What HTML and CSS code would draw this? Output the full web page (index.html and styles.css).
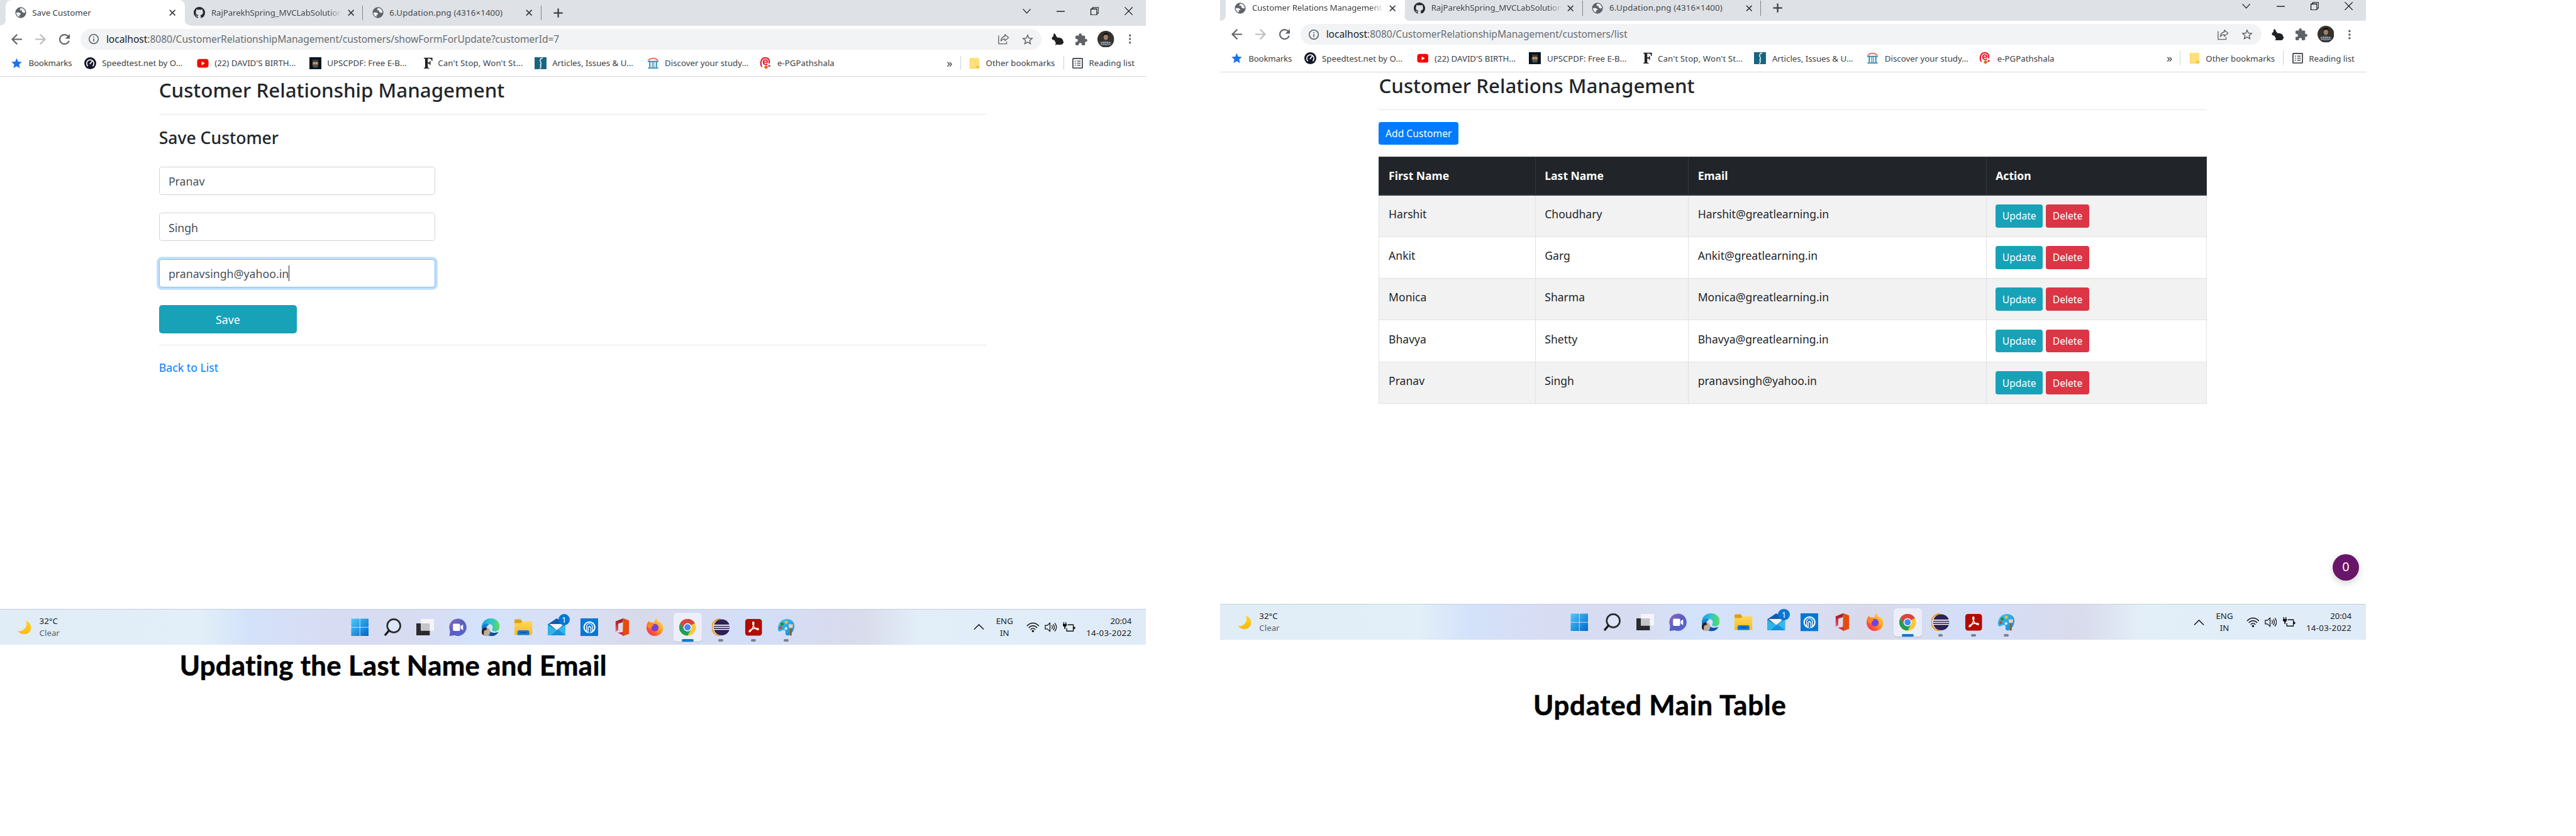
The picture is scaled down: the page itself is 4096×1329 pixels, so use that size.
FILE: index.html
```html
<!DOCTYPE html>
<html lang="en">
<head>
<meta charset="utf-8">
<title>Customer Relationship Management</title>
<link rel="stylesheet" href="styles.css">
</head>
<body>
<svg class="sprite" aria-hidden="true">
  <defs>
    <linearGradient id="gWin" x1="0" y1="0" x2="1" y2="1"><stop offset="0" stop-color="#4cc9fd"/><stop offset="1" stop-color="#0067c8"/></linearGradient>
    <linearGradient id="gChat" x1="0" y1="0" x2="1" y2="1"><stop offset="0" stop-color="#8a6fb8"/><stop offset=".5" stop-color="#5a5cc4"/><stop offset="1" stop-color="#5566d2"/></linearGradient>
    <linearGradient id="gEdge" x1="0" y1="0" x2="1" y2="0"><stop offset="0" stop-color="#1a9fdd"/><stop offset=".5" stop-color="#2fc3cf"/><stop offset="1" stop-color="#5fdd5a"/></linearGradient>
    <linearGradient id="gFold" x1="0" y1="0" x2="0" y2="1"><stop offset="0" stop-color="#ffd65c"/><stop offset="1" stop-color="#f8bd1c"/></linearGradient>
    <linearGradient id="gFox" x1="1" y1="0" x2="0" y2="1"><stop offset="0" stop-color="#fff04a"/><stop offset=".45" stop-color="#ff9a1f"/><stop offset=".75" stop-color="#ff4a3c"/><stop offset="1" stop-color="#f0289b"/></linearGradient>
    <linearGradient id="gPaint" x1="0" y1="0" x2="1" y2="1"><stop offset="0" stop-color="#43c8f5"/><stop offset="1" stop-color="#1186dc"/></linearGradient>
    <linearGradient id="gMoon" x1="0" y1="0" x2="0" y2="1"><stop offset="0" stop-color="#ffd51e"/><stop offset="1" stop-color="#fcb813"/></linearGradient>
    <linearGradient id="gOff" x1="0" y1="0" x2="0" y2="1"><stop offset="0" stop-color="#8e1414"/><stop offset=".6" stop-color="#d43a4a"/><stop offset="1" stop-color="#e8607a"/></linearGradient>
  </defs>
  <symbol id="globe" viewBox="0 0 20 20"><circle cx="10" cy="10" r="9.600" fill="#5f6368"/><path d="M2 9.600h3.600c3 0 4.600 1.300 4.600 3.900H7.600v4A8 8 0 0 1 2 9.600zM18 9.500c-1 1.300-3.500 1.600-4.300 0-1-.4-1.900-.8-1.900-2.300V5.700H8.300c0-1.700.9-2.700 1.900-3.700A8 8 0 0 1 18 9.500z" fill="#fff" opacity=".92"/></symbol>
  <symbol id="github" viewBox="0 0 16 16"><path fill="#24292f" d="M8 0C3.580 0 0 3.580 0 8c0 3.540 2.290 6.530 5.470 7.590.4.070.55-.17.55-.38 0-.19-.01-.82-.01-1.490-2.010.37-2.530-.49-2.690-.94-.09-.23-.48-.94-.82-1.130-.28-.15-.68-.52-.01-.53.630-.01 1.080.58 1.230.82.720 1.210 1.870.87 2.330.66.070-.52.280-.87.510-1.070-1.780-.2-3.640-.89-3.640-3.950 0-.87.310-1.590.820-2.150-.08-.2-.36-1.020.080-2.120 0 0 .670-.21 2.200.820.640-.18 1.320-.27 2-.27.680 0 1.360.090 2 .270 1.530-1.040 2.200-.820 2.200-.820.440 1.100.160 1.920.080 2.120.510.560.820 1.270.820 2.150 0 3.070-1.870 3.750-3.650 3.950.290.250.540.730.540 1.480 0 1.070-.010 1.930-.010 2.200 0 .210.150.460.550.380A8.013 8.013 0 0 0 16 8c0-4.420-3.580-8-8-8z"/></symbol>
  <symbol id="x" viewBox="0 0 12 12"><path d="M1 1l10 10M11 1L1 11" stroke="#3c4043" stroke-width="2" fill="none"/></symbol>
  <symbol id="plus" viewBox="0 0 16 16"><path d="M8 .5v15M.5 8h15" stroke="#3c4043" stroke-width="2.400" fill="none"/></symbol>
  <symbol id="chev" viewBox="0 0 14 14"><path d="M.8 3.500L7 10.500l6.200-7" stroke="#111" stroke-width="1.200" fill="none"/></symbol>
  <symbol id="min" viewBox="0 0 14 14"><path d="M0 7.500h14" stroke="#000" stroke-width="1.200" fill="none"/></symbol>
  <symbol id="rest" viewBox="0 0 14 14"><path d="M.6 3.600h10v9.800h-10zM3.500 3.400V1h10v9.500h-2.800" stroke="#000" stroke-width="1.200" fill="none"/></symbol>
  <symbol id="close" viewBox="0 0 14 14"><path d="M.5.5l13 13M13.500.5l-13 13" stroke="#000" stroke-width="1.100" fill="none"/></symbol>
  <symbol id="back" viewBox="4 4 16 16"><path d="M20 11H7.830l5.590-5.590L12 4l-8 8 8 8 1.410-1.410L7.830 13H20z"/></symbol>
  <symbol id="reload" viewBox="4 4 16 16"><path d="M17.650 6.350A7.958 7.958 0 0 0 12 4a8 8 0 1 0 7.730 10h-2.080A6 6 0 1 1 12 6c1.660 0 3.140.690 4.220 1.780L13 11h7V4z"/></symbol>
  <symbol id="info" viewBox="2 2 20 20"><path d="M11 7h2v2h-2zm0 4h2v6h-2zm1-9a10 10 0 1 0 0 20 10 10 0 0 0 0-20zm0 18a8 8 0 1 1 0-16 8 8 0 0 1 0 16z"/></symbol>
  <symbol id="share" viewBox="0 0 20 20"><path d="M1 4v14.500h14V14.500" fill="none" stroke="#5f6368" stroke-width="1.500"/><path d="M12 2l6.500 5.500L12 13V9.800c-3 0-5 1-7 3.700.4-4 2.500-7.500 7-8.200z" fill="none" stroke="#5f6368" stroke-width="1.500" stroke-linejoin="round"/></symbol>
  <symbol id="star" viewBox="2 2 20 19"><path d="M22 9.240l-7.190-.62L12 2 9.190 8.630 2 9.240l5.460 4.730L5.820 21 12 17.270 18.180 21l-1.630-7.030zM12 15.400l-3.760 2.270 1-4.280-3.320-2.880 4.380-.38L12 6.100l1.710 4.040 4.380.38-3.320 2.880 1 4.280z"/></symbol>
  <symbol id="rabbit" viewBox="0 0 20 18"><path d="M4 0c1.800.6 2.800 2.300 3.100 4.300 1.300.5 1.900 1.500 1.900 2.700 3-.6 9.300.3 9.700 6 .9.200 1 1.700.1 2-.5 1.600-1.800 3-3.800 3H5.800c-.6-.8.2-1.600 1.400-1.700L4.600 11C1.800 10.800 0 9.300.4 7.600.7 6.300 2 5.300 3.100 4.800 2.700 3.200 3.200 1.600 4 0z" fill="#202124"/></symbol>
  <symbol id="puzzle" viewBox="2 1 21 21"><path fill="#5f6368" d="M20.500 11H19V7c0-1.100-.9-2-2-2h-4V3.500a2.500 2.500 0 0 0-5 0V5H4c-1.100 0-2 .9-2 2v3.800h1.500c1.490 0 2.700 1.210 2.700 2.700s-1.210 2.700-2.700 2.700H2V20c0 1.100.9 2 2 2h3.800v-1.500c0-1.490 1.210-2.700 2.700-2.700s2.700 1.210 2.700 2.700V22H17c1.100 0 2-.9 2-2v-4h1.500a2.500 2.500 0 0 0 0-5z"/></symbol>
  <symbol id="avatar" viewBox="0 0 28 28"><circle cx="14" cy="14" r="14" fill="#35312d"/><path d="M4.500 22c1-4 4.500-5 9-5s8 1 9.500 5a14 14 0 0 1-18.500 0z" fill="#4c5a68"/><ellipse cx="14" cy="10.500" rx="3.800" ry="5" fill="#a07e68"/><path d="M9.600 10c-.6-5 2-6.500 4.500-6.500s5 1.500 4.300 6c-1-2.500-1.500-3-4-3s-4 .5-4.800 3.500z" fill="#120f0d"/><path d="M5 19.500h18M6 22.500h16" stroke="#b9bcc0" stroke-width="1.500" stroke-dasharray="2.500 1"/></symbol>
  <symbol id="dots" viewBox="0 0 4 16"><g fill="#5f6368"><circle cx="2" cy="2" r="1.900"/><circle cx="2" cy="8" r="1.900"/><circle cx="2" cy="14" r="1.900"/></g></symbol>

  <symbol id="bstar" viewBox="0 0 20 20"><path d="M10 1.500l2.500 5.800 6.300.6-4.800 4.200 1.500 6.200L10 15l-5.500 3.300L6 12.100 1.200 7.900l6.300-.6z" fill="#1a73e8"/></symbol>
  <symbol id="speed" viewBox="0 0 20 20"><circle cx="10" cy="10" r="10" fill="#141526"/><path d="M6 14.800a6 6 0 1 1 8 0" fill="none" stroke="#fff" stroke-width="1.800"/><path d="M9.200 11.500l4-5" stroke="#fff" stroke-width="1.800"/></symbol>
  <symbol id="yt" viewBox="0 0 20 20"><rect x=".5" y="3" width="19" height="14.500" rx="4" fill="#f00"/><path d="M8 7.200l5.500 3.100L8 13.400z" fill="#fff"/></symbol>
  <symbol id="upsc" viewBox="0 0 20 20"><rect width="20" height="20" fill="#07131c"/><path d="M5.500 6c0-3 9-3 9 0v2h-9z" fill="#2b3f4c"/><rect x="5" y="7.500" width="10" height="6" rx="2" fill="#9b6b43"/><path d="M7 10h2m2 0h2" stroke="#fff" stroke-width="1.300"/><path d="M5 13.500h10l-1.500 4h-7z" fill="#44535c"/><path d="M5 5.500l2-2m8 2l-2-2" stroke="#c33448" stroke-width="1"/></symbol>
  <symbol id="fnews" viewBox="0 0 20 20"><path d="M3 .8h14.500v5.400h-1.200c-.4-2.600-1.500-3.700-3.800-3.700H9.700v6.300h1.200c1.500 0 2.200-.8 2.400-2.500h1v7h-1c-.2-1.900-1-2.700-2.400-2.700H9.700v5.200c0 1.600.7 2 2.600 2.200v1H3v-1c1.700-.2 2.200-.6 2.200-2.200V4c0-1.500-.6-2-2.200-2.200z" fill="#222"/></symbol>
  <symbol id="teal" viewBox="0 0 20 20"><rect width="20" height="20" fill="#176580"/><path d="M13.500 1.500c-3 .3-4.200 2.200-4 4.700.2 1.700 1.300 2.500 1.300 4.300 0 1-.4 1.800-1 2.700M9 12.500c1.500.4 1.800 2.300 1.300 4.500-.2 1-.8 1.600-1.600 2" fill="none" stroke="#e8f2f5" stroke-width="1.700"/></symbol>
  <symbol id="inst" viewBox="0 0 20 20"><path d="M.5 5.500C4 1.500 6 .8 10 .8s6 .7 9.500 4.700l-3 0C14 3.500 12.500 3 10 3s-4 .5-6.500 2.500z" fill="#f0735a"/><path d="M1 6h18v1.800H1zM3.500 8h2v9h-2zM8 8h1.300v9H8zm2.700 0H12v9h-1.300zm3.800 0h2v9h-2zM1.500 17.200h17V19h-17z" fill="#2a86ae"/></symbol>
  <symbol id="epg" viewBox="0 0 20 20"><path d="M4 16C.5 13 .8 1 9.500 1c6 0 7.500 5 6 9.500" fill="none" stroke="#e8192c" stroke-width="2.300"/><path d="M6 8.300h7c0-5-7-5-7 0 0 4.500 5 4.300 7 2.700" fill="none" stroke="#e8192c" stroke-width="2"/><path d="M10.500 13l4 3.500-4 3.500-3.500-3.500z" fill="#f4661b"/><circle cx="16" cy="14.500" r="1.700" fill="#c01b24"/></symbol>
  <symbol id="folder" viewBox="0 0 16 18"><rect width="16" height="18" rx="1.500" fill="#ffe07a"/><path d="M11 13.500h5v3q0 1.500-1.500 1.500H11z" fill="#f1c544"/><path d="M.5 1.500V17l1 .5h9v-4.500" fill="none" stroke="#f5cf55" stroke-width="1"/></symbol>
  <symbol id="rlist" viewBox="0 0 18 18"><rect x="1" y="1" width="16" height="16" rx="1" fill="none" stroke="#4d5156" stroke-width="2"/><path d="M4 5.500h2m2 0h6M4 9h2m2 0h6M4 12.500h2m2 0h6" stroke="#4d5156" stroke-width="1.600"/></symbol>

  <symbol id="moon" viewBox="0 0 24 24"><path d="M14.500 0c6 2.500 9.500 8 9 13.500-.6 6-5.500 10.500-12 10.500-4.500 0-8.500-2-11.500-6 2.500 1 6 1 9.500-1.500C16 12.500 16.500 6.500 14.500 0z" fill="url(#gMoon)"/></symbol>
  <symbol id="win" viewBox="0 0 30 30"><path d="M.5.5h14v14H.5zm15 0h14v14h-14zM.5 15.500h14v14H.5zm15 0h14v14h-14z" fill="url(#gWin)"/></symbol>
  <symbol id="find" viewBox="0 0 30 30"><circle cx="17" cy="12.500" r="11" fill="#dfe6fa" stroke="#2c2c2e" stroke-width="2.800"/><path d="M9 20.500L3 27.500" stroke="#1c1c1e" stroke-width="3.500" stroke-linecap="round"/></symbol>
  <symbol id="task" viewBox="0 0 30 30"><path d="M0 8.500h22.500V28.500H0z" fill="#2b2b2d"/><path d="M7.500 1h22.500v19.500H7.500z" fill="#f6f6f8"/><path d="M7.500 8.500h15v12h-15z" fill="#c6c6ca"/></symbol>
  <symbol id="chat" viewBox="0 0 30 30"><path d="M15 .5a14.500 14.500 0 1 1-5.500 28L.8 29.500c-.6-.2.7-2.500.8-8.500A14.500 14.500 0 0 1 15 .5z" fill="url(#gChat)"/><rect x="6.500" y="9" width="12" height="12" rx="2" fill="#fff"/><path d="M19.500 13l4-3v10l-4-3z" fill="#fff"/></symbol>
  <symbol id="edge" viewBox="0 0 30 30"><path d="M0 13C1 5 7.500 0 15.500 0 24 0 30 6 30 13.500c0 5.500-3.500 8.500-7.500 8.500-3.500 0-6-1.500-5-3.500 2-3.500 1-8-4-9C8 8.500 3 10 0 13z" fill="url(#gEdge)"/><path d="M0 13c3-4 8.500-5 13-3-4 1-6 6-4 11.500 1.500 4.500 5 7.500 8 8.500C8 30-1 24 0 13z" fill="#1583d6"/><path d="M12 17c0 6 7 9 16 6-2.500 4.500-7 7-12.500 7C11 28 9.500 21 12 17z" fill="#0e4fa0"/><circle cx="7" cy="22.500" r="7.300" fill="#c3ab9c"/><path d="M0 21c1-5 4-6.500 7.500-5.200L9 19l-5 1.500L3 28.500A7.300 7.300 0 0 1 0 21z" fill="#2b2322"/></symbol>
  <symbol id="expl" viewBox="0 0 30 30"><path d="M0 3.500q0-2 2-2h8l3 3.500v4H0z" fill="#dda111"/><path d="M0 8h11l3-3h16v21.500q0 1.500-1.500 1.500h-27Q0 28 0 26.500z" fill="url(#gFold)"/><path d="M5 28v-5q0-3 3-3h14q3 0 3 3v5z" fill="#1478d4"/><path d="M9.500 23.800h11" stroke="#0a4f9c" stroke-width="1.500"/></symbol>
  <symbol id="mail" viewBox="0 0 30 30"><path d="M0 10L15 0l15 10v18.500H0z" fill="#0f5cad"/><path d="M2.500 9.500h25L15 20z" fill="#f3f4f6"/><path d="M0 10l17 11.500L0 28.500z" fill="#2fb3ea"/><path d="M30 10v18.500H0z" fill="#32b8f0"/><path d="M17 18.500l13 10H5z" fill="#1b8edb"/></symbol>
  <symbol id="vault" viewBox="0 0 30 30"><path d="M0 0h30v30H0z" fill="#0078d7"/><circle cx="15" cy="15" r="9" fill="none" stroke="#fff" stroke-width="2.200"/><path d="M10.300 21v-7.500a4.700 4.700 0 0 1 9.400 0V21M13 22v-6.500l2-2.500 2 2.500V22" fill="none" stroke="#fff" stroke-width="1.500"/><path d="M13.800 16h2.400v8.500h-2.400z" fill="#0078d7"/></symbol>
  <symbol id="office" viewBox="0 0 30 30"><path d="M17 0l9.500 3.500v22.500L16 29.700z" fill="#e64a0c"/><path d="M17 0l-13 5v17.500l4.500-2.500V9l7.500-2.500z" fill="url(#gOff)"/><path d="M7.500 24l8.500-1v-1h2v7.500z" fill="#d62a48"/><path d="M16.500 0l2.500 1v25l-3 3.500z" fill="#e05410" opacity=".6"/></symbol>
  <symbol id="fox" viewBox="0 0 30 30"><path d="M1 16C1 10 3 6 5.500 4c.3 1.500 1 2.500 2 3 2-1 4.500-1 6.500.5C14 4 16 1 18.500 0c0 3.500 1.500 5 4 7l.5-1.500c4 3 6.500 7 6 12C28.500 24.500 22.500 29.500 15 29.500S1.500 24 1 16z" fill="url(#gFox)"/><circle cx="15" cy="15.500" r="6.300" fill="#7a3fd8"/><path d="M3 11c4-2.500 8-1.500 10.500 1.500-3 0-4.500 1.500-4 4.500-4 0-7-2-6.500-6z" fill="#ff8a1e"/></symbol>
  <symbol id="chrome" viewBox="0 0 30 30"><circle cx="15" cy="15" r="14" fill="#fcc934"/><path d="M15 15L2.900 8A14 14 0 0 1 27.100 8z" fill="#d9453a"/><path d="M2.900 8A14 14 0 0 0 15 29l6-10.500L15 15 8.900 18.500z" fill="#1e9e58"/><path d="M15 8.500h12.400A14 14 0 0 0 2.900 8l6.200 10.500z" fill="#d9453a"/><circle cx="15" cy="15" r="6.800" fill="#fff"/><circle cx="15" cy="15" r="5.300" fill="#4486f4"/></symbol>
  <symbol id="eclipse" viewBox="0 0 30 30"><path d="M13 1.500A14 14 0 0 0 13 28.500C8.500 24 7 19 7 15s1.500-9 6-13.500z" fill="#f7941e"/><path d="M14 1A14 14 0 0 0 14 29" fill="none" stroke="#f7941e" stroke-width="2"/><circle cx="16.500" cy="15" r="13.500" fill="#2c2255"/><path d="M3 11.500h27M3 15h27M3 18.500h27" stroke="#fff" stroke-width="1.700"/></symbol>
  <symbol id="pdf" viewBox="0 0 30 30"><rect x="1" y="1" width="28" height="28" rx="4.500" fill="#b30b00"/><path d="M14.300 6c2 0 1.500 4-.6 9-1.800 4.200-4.200 8-5.800 7.500-1.500-.5.500-3.500 6-5s9.500-1 9.500.8c0 1.700-3.800.5-6.500-2.300C14 13 12.500 6.500 14.300 6z" fill="none" stroke="#fff" stroke-width="1.700"/></symbol>
  <symbol id="paint" viewBox="0 0 30 30"><path d="M16 1c8 0 13 5.500 12.500 12C28 20 24 27 19 28.500c-3.500 1-6-1-5.500-4s0-5-3-5c-4 0-5 3.500-8 2C.5 20.500.5 15.500 2 11 4 5 9.500 1 16 1z" fill="url(#gPaint)"/><circle cx="8" cy="9.500" r="2.700" fill="#1f8f2f"/><circle cx="15" cy="6.500" r="2.600" fill="#f6bf26"/><circle cx="5.500" cy="15.500" r="2.600" fill="#cf4a22"/><circle cx="14.500" cy="17" r="2.200" fill="#eaf6fd"/><path d="M19 10h7v4l-2 3h-3l-2-3z" fill="#ecd2ae"/><path d="M21 16h3v12q-1.500 3-3 0z" fill="#9a5f1a"/></symbol>
  <symbol id="up" viewBox="0 0 18 10"><path d="M1 9l8-8 8 8" fill="none" stroke="#111" stroke-width="1.500"/></symbol>
  <symbol id="wifi" viewBox="0 0 22 17"><path d="M1 6.500c6-6.500 14-6.500 20 0M4 9.600c4-4.600 10-4.600 14 0M7 12.600c2.500-2.900 5.500-2.900 8 0" fill="none" stroke="#111" stroke-width="1.500"/><circle cx="11" cy="15" r="1.800" fill="#111"/></symbol>
  <symbol id="vol" viewBox="0 0 21 17"><path d="M1 5.500h3.500L9 1.500v14l-4.500-4H1z" fill="none" stroke="#111" stroke-width="1.300"/><path d="M12 5.500q2 3 0 6M14.500 3.500q3.500 5 0 10M17 1.500q5.500 7 0 14" fill="none" stroke="#111" stroke-width="1.300"/></symbol>
  <symbol id="batt" viewBox="0 0 21 17"><path d="M8 4.500h9.500v10.500H6.500v-5" fill="none" stroke="#111" stroke-width="1.400"/><path d="M18 8h2.500v3.500H18z" fill="#111"/><path d="M1.500 0v3m3.500-3v3" stroke="#111" stroke-width="1.400"/><path d="M0 3h6.500v3L4.200 8.500v3H2.500v-3L0 6z" fill="#111"/></symbol>
</svg>

<main class="canvas">
  <section class="shot">
    <div class="window">
      <header class="tabstrip">
        <div class="tab active"><svg class="fav"><use href="#globe"/></svg><span class="title">Save Customer</span><svg class="tx"><use href="#x"/></svg></div>
        <div class="tab"><svg class="fav"><use href="#github"/></svg><span class="title fade">RajParekhSpring_MVCLabSolution</span><svg class="tx"><use href="#x"/></svg></div>
        <div class="tab"><svg class="fav"><use href="#globe"/></svg><span class="title wide">6.Updation.png (4316×1400)</span><svg class="tx"><use href="#x"/></svg></div>
        <svg class="newtab"><use href="#plus"/></svg>
        <div class="winctl"><svg><use href="#chev"/></svg><svg><use href="#min"/></svg><svg><use href="#rest"/></svg><svg><use href="#close"/></svg></div>
      </header>
      <div class="toolbar">
        <svg class="nav"><use href="#back"/></svg><svg class="nav fwd"><use href="#back"/></svg><svg class="nav"><use href="#reload"/></svg>
        <div class="omnibox"><svg class="info"><use href="#info"/></svg><span class="url"><b>localhost</b>:8080/CustomerRelationshipManagement/customers/showFormForUpdate?customerId=7</span><svg class="share"><use href="#share"/></svg><svg class="fave"><use href="#star"/></svg></div>
        <svg class="rabbit"><use href="#rabbit"/></svg><svg class="puzzle"><use href="#puzzle"/></svg><svg class="avatar"><use href="#avatar"/></svg><svg class="dots"><use href="#dots"/></svg>
      </div>
      <nav class="bookmarks">
        <a class="first"><svg><use href="#bstar"/></svg><span>Bookmarks</span></a>
        <a><svg><use href="#speed"/></svg><span>Speedtest.net by O...</span></a>
        <a><svg><use href="#yt"/></svg><span>(22) DAVID'S BIRTH...</span></a>
        <a><svg><use href="#upsc"/></svg><span>UPSCPDF: Free E-B...</span></a>
        <a class="narrow"><svg><use href="#fnews"/></svg><span>Can't Stop, Won't St...</span></a>
        <a><svg><use href="#teal"/></svg><span>Articles, Issues &amp; U...</span></a>
        <a><svg><use href="#inst"/></svg><span>Discover your study...</span></a>
        <a class="last"><svg><use href="#epg"/></svg><span>e-PGPathshala</span></a>
        <span class="more">»</span>
        <a class="side other"><svg><use href="#folder"/></svg><span>Other bookmarks</span></a>
        <a class="side"><svg><use href="#rlist"/></svg><span>Reading list</span></a>
      </nav>
      <div class="page">
        <h1>Customer Relationship Management</h1>
        <hr>
        <h2>Save Customer</h2>
        <div class="field">Pranav</div>
        <div class="field">Singh</div>
        <div class="field focus">pranavsingh@yahoo.in<span class="caret"></span></div>
        <div class="save">Save</div>
        <hr class="second">
        <a class="backlink">Back to List</a>
      </div>
      <footer class="taskbar">
        <svg class="moon"><use href="#moon"/></svg>
        <div class="weather"><span>32°C</span><span>Clear</span></div>
        <div class="apps">
          <span><svg><use href="#win"/></svg></span><span><svg><use href="#find"/></svg></span><span><svg><use href="#task"/></svg></span><span><svg><use href="#chat"/></svg></span><span><svg><use href="#edge"/></svg></span><span><svg><use href="#expl"/></svg></span><span><svg><use href="#mail"/></svg><em>1</em></span><span><svg><use href="#vault"/></svg></span><span><svg><use href="#office"/></svg></span><span><svg><use href="#fox"/></svg></span><span class="on"><svg><use href="#chrome"/></svg></span><span class="run"><svg><use href="#eclipse"/></svg></span><span class="run"><svg><use href="#pdf"/></svg></span><span class="run"><svg><use href="#paint"/></svg></span>
        </div>
        <svg class="up"><use href="#up"/></svg>
        <div class="lang"><span>ENG</span><span>IN</span></div>
        <svg class="wifi"><use href="#wifi"/></svg><svg class="vol"><use href="#vol"/></svg><svg class="batt"><use href="#batt"/></svg>
        <div class="clock"><span>20:04</span><span>14-03-2022</span></div>
      </footer>
    </div>
    <p class="caption">Updating the Last Name and Email</p>
  </section>

  <section class="shot right">
    <div class="window">
      <header class="tabstrip">
        <div class="tab active"><svg class="fav"><use href="#globe"/></svg><span class="title fade">Customer Relations Management</span><svg class="tx"><use href="#x"/></svg></div>
        <div class="tab"><svg class="fav"><use href="#github"/></svg><span class="title fade">RajParekhSpring_MVCLabSolution</span><svg class="tx"><use href="#x"/></svg></div>
        <div class="tab"><svg class="fav"><use href="#globe"/></svg><span class="title wide">6.Updation.png (4316×1400)</span><svg class="tx"><use href="#x"/></svg></div>
        <svg class="newtab"><use href="#plus"/></svg>
        <div class="winctl"><svg><use href="#chev"/></svg><svg><use href="#min"/></svg><svg><use href="#rest"/></svg><svg><use href="#close"/></svg></div>
      </header>
      <div class="toolbar">
        <svg class="nav"><use href="#back"/></svg><svg class="nav fwd"><use href="#back"/></svg><svg class="nav"><use href="#reload"/></svg>
        <div class="omnibox"><svg class="info"><use href="#info"/></svg><span class="url"><b>localhost</b>:8080/CustomerRelationshipManagement/customers/list</span><svg class="share"><use href="#share"/></svg><svg class="fave"><use href="#star"/></svg></div>
        <svg class="rabbit"><use href="#rabbit"/></svg><svg class="puzzle"><use href="#puzzle"/></svg><svg class="avatar"><use href="#avatar"/></svg><svg class="dots"><use href="#dots"/></svg>
      </div>
      <nav class="bookmarks">
        <a class="first"><svg><use href="#bstar"/></svg><span>Bookmarks</span></a>
        <a><svg><use href="#speed"/></svg><span>Speedtest.net by O...</span></a>
        <a><svg><use href="#yt"/></svg><span>(22) DAVID'S BIRTH...</span></a>
        <a><svg><use href="#upsc"/></svg><span>UPSCPDF: Free E-B...</span></a>
        <a class="narrow"><svg><use href="#fnews"/></svg><span>Can't Stop, Won't St...</span></a>
        <a><svg><use href="#teal"/></svg><span>Articles, Issues &amp; U...</span></a>
        <a><svg><use href="#inst"/></svg><span>Discover your study...</span></a>
        <a class="last"><svg><use href="#epg"/></svg><span>e-PGPathshala</span></a>
        <span class="more">»</span>
        <a class="side other"><svg><use href="#folder"/></svg><span>Other bookmarks</span></a>
        <a class="side"><svg><use href="#rlist"/></svg><span>Reading list</span></a>
      </nav>
      <div class="page">
        <h1>Customer Relations Management</h1>
        <hr>
        <div class="btn add">Add Customer</div>
        <table>
          <thead><tr><th class="c1">First Name</th><th class="c2">Last Name</th><th class="c3">Email</th><th>Action</th></tr></thead>
          <tbody>
            <tr><td>Harshit</td><td>Choudhary</td><td>Harshit@greatlearning.in</td><td><div class="acts"><span class="btn upd">Update</span><span class="btn del">Delete</span></div></td></tr>
            <tr><td>Ankit</td><td>Garg</td><td>Ankit@greatlearning.in</td><td><div class="acts"><span class="btn upd">Update</span><span class="btn del">Delete</span></div></td></tr>
            <tr><td>Monica</td><td>Sharma</td><td>Monica@greatlearning.in</td><td><div class="acts"><span class="btn upd">Update</span><span class="btn del">Delete</span></div></td></tr>
            <tr><td>Bhavya</td><td>Shetty</td><td>Bhavya@greatlearning.in</td><td><div class="acts"><span class="btn upd">Update</span><span class="btn del">Delete</span></div></td></tr>
            <tr><td>Pranav</td><td>Singh</td><td>pranavsingh@yahoo.in</td><td><div class="acts"><span class="btn upd">Update</span><span class="btn del">Delete</span></div></td></tr>
          </tbody>
        </table>
        <span class="bubble">0</span>
      </div>
      <footer class="taskbar">
        <svg class="moon"><use href="#moon"/></svg>
        <div class="weather"><span>32°C</span><span>Clear</span></div>
        <div class="apps">
          <span><svg><use href="#win"/></svg></span><span><svg><use href="#find"/></svg></span><span><svg><use href="#task"/></svg></span><span><svg><use href="#chat"/></svg></span><span><svg><use href="#edge"/></svg></span><span><svg><use href="#expl"/></svg></span><span><svg><use href="#mail"/></svg><em>1</em></span><span><svg><use href="#vault"/></svg></span><span><svg><use href="#office"/></svg></span><span><svg><use href="#fox"/></svg></span><span class="on"><svg><use href="#chrome"/></svg></span><span class="run"><svg><use href="#eclipse"/></svg></span><span class="run"><svg><use href="#pdf"/></svg></span><span class="run"><svg><use href="#paint"/></svg></span>
        </div>
        <svg class="up"><use href="#up"/></svg>
        <div class="lang"><span>ENG</span><span>IN</span></div>
        <svg class="wifi"><use href="#wifi"/></svg><svg class="vol"><use href="#vol"/></svg><svg class="batt"><use href="#batt"/></svg>
        <div class="clock"><span>20:04</span><span>14-03-2022</span></div>
      </footer>
    </div>
    <p class="caption">Updated Main Table</p>
  </section>
</main>
</body>
</html>
```
FILE: styles.css
```css
* { box-sizing: border-box; }
body { margin: 0; background: #fff; overflow: hidden; }
.sprite { position: absolute; width: 0; height: 0; }

.canvas {
  zoom: 0.949;
  width: 4316px;
  height: 1400px;
  display: flex;
  gap: 124px;
  overflow: hidden;
  font-family: "Noto Sans", "Open Sans", sans-serif;
  color: #212529;
}
.shot { width: 1920px; display: flex; flex-direction: column; }
.shot.right { margin-top: -8px; }
.window { height: 1080px; display: flex; flex-direction: column; }

/* tab strip */
.tabstrip { height: 43px; background: #dee1e6; display: flex; align-items: center; padding-left: 10px; font-size: 14px; flex: none; }
.tab { width: 298.5px; height: 43px; display: flex; align-items: center; padding: 0 14px 0 15px; border-right: 1px solid transparent; position: relative; color: #45494d; }
.tab:nth-child(n+2)::after { content: ""; position: absolute; right: -1px; top: 9px; width: 1px; height: 25px; background: #808489; }
.tab.active { background: #fff; border-radius: 10px 10px 0 0; color: #3c4043; width: 300px; }
.tab.active::before, .tab.active::after { content: ""; position: absolute; bottom: 0; width: 10px; height: 10px; }
.tab.active::before { left: -10px; background: radial-gradient(circle at 0 0, #dee1e6 9.5px, #fff 10px); }
.tab.active::after { right: -10px; background: radial-gradient(circle at 100% 0, #dee1e6 9.5px, #fff 10px); }
.fav { width: 19px; height: 19px; flex: none; }
.title { flex: 1; margin-left: 10px; margin-right: 10px; white-space: nowrap; overflow: hidden; line-height: 22px; }
.title.wide { letter-spacing: .14px; }
.title.fade { -webkit-mask-image: linear-gradient(90deg, #000 90%, transparent 100%); mask-image: linear-gradient(90deg, #000 90%, transparent 100%); letter-spacing: -.1px; }
.tx { width: 11px; height: 11px; flex: none; }
.newtab { width: 16px; height: 16px; margin-left: 20px; }
.winctl { margin-left: auto; display: flex; gap: 43px; padding-right: 22px; margin-top: -6px; }
.winctl svg { width: 14px; height: 14px; }

/* toolbar */
.toolbar { height: 45px; display: flex; align-items: center; padding: 0 25px 0 19px; flex: none; fill: #5f6368; }
.nav { width: 18px; height: 18px; margin-right: 22px; flex: none; }
.nav.fwd { fill: #b9bbbd; transform: scaleX(-1); }
.omnibox { width: 1610px; height: 35px; margin-left: -4px; border-radius: 18px; background: #f1f3f4; display: flex; align-items: center; padding: 0 14px; }
.info { width: 17px; height: 17px; margin-right: 12px; }
.url { font-size: 16.5px; letter-spacing: -.08px; line-height: 24px; color: #6a6e73; white-space: nowrap; }
.url b { font-weight: 400; color: #202124; }
.share { width: 19px; height: 19px; margin-left: auto; }
.fave { width: 19px; height: 18px; margin-left: 21px; }
.rabbit { width: 21px; height: 19px; margin-left: 17px; }
.puzzle { width: 20px; height: 20px; margin-left: 19px; }
.avatar { width: 28px; height: 28px; margin-left: 17px; }
.dots { width: 4px; height: 17px; margin-left: auto; }

/* bookmarks bar */
.bookmarks { height: 41px; border-bottom: 1px solid #d5d7da; display: flex; align-items: center; padding: 0 19px 5px 18px; font-size: 14px; color: #3c4043; flex: none; white-space: nowrap; }
.bookmarks a { width: 188.6px; display: flex; align-items: center; gap: 10px; }
.bookmarks a svg { width: 20px; height: 20px; flex: none; }
.bookmarks a.first { width: 123px; letter-spacing: -.2px; }
.bookmarks a.narrow { gap: 7px; letter-spacing: .12px; }
.bookmarks a.last { width: auto; }
.more { margin-left: auto; margin-right: 13px; font-size: 19px; line-height: 20px; }
.bookmarks a.side { width: auto; height: 24px; border-left: 1px solid #cfd1d4; padding-left: 14px; }
.bookmarks a.other { padding-right: 14px; }
.bookmarks a.side svg { width: 18px; height: 18px; }

/* page */
.page { flex: 1; padding: 2px 266.25px 0; position: relative; font-size: 18.7px; }
h1, h2 { margin: 0; font-weight: 500; white-space: nowrap; }
h1 { font-size: 33px; line-height: 42px; padding-bottom: 1px; }
hr { margin: 17px 0 0; border: 0; border-top: 1px solid #e4e5e6; }
h2 { font-size: 28px; line-height: 36px; margin: 21px 0 30px; }
.field { width: 462.5px; height: 47.5px; margin-bottom: 30px; border: 1px solid #ced4da; border-radius: 5px; padding: 2px 15px 0; display: flex; align-items: center; color: #495057; background: #fff; }
.field.focus { border-color: #80bdff; box-shadow: 0 0 0 4px #bfdeff; }
.caret { width: 1px; height: 27px; background: #222; margin-top: -2px; }
.save { width: 231.25px; height: 47.5px; border-radius: 5px; background: #17a2b8; color: #fff; padding-top: 1px; display: flex; align-items: center; justify-content: center; }
hr.second { margin-top: 19px; }
.backlink { display: block; margin-top: 22px; line-height: 30px; color: #007bff; }
.btn { height: 38.75px; border-radius: 4px; padding-top: 1px; color: #fff; font-size: 16.5px; display: inline-flex; align-items: center; justify-content: center; }
.add { width: 133.5px; background: #007bff; margin: 20px 0; display: flex; }
table { width: 1387.5px; border-collapse: collapse; font-size: 18.5px; table-layout: fixed; }
th { background: #212529; color: #fff; text-align: left; height: 63px; border: 1px solid #32383e; border-bottom: 3px solid #32383e; padding: 0 15.5px; font-weight: 700; }
th.c1 { width: 261.5px; } th.c2 { width: 256.5px; } th.c3 { width: 499px; }
td { height: 70px; border: 1px solid #dee2e6; padding: 16px 15.5px 0; vertical-align: top; line-height: 30px; }
td:last-child { padding-top: 15px; }
tbody tr:nth-child(odd) { background: #f2f2f2; }
.acts { display: flex; gap: 5px; }
.upd { width: 79px; background: #17a2b8; }
.del { width: 73px; background: #dc3545; }
.bubble { position: absolute; right: 11px; bottom: 39px; width: 45px; height: 45px; border-radius: 50%; background: #68156a; color: #fff; font-size: 21px; display: flex; align-items: center; justify-content: center; padding-bottom: 4px; box-shadow: 0 4px 12px rgba(0,0,0,.18); }

/* taskbar */
.taskbar { height: 60px; flex: none; display: flex; align-items: center; padding: 0 24px 0 30px; border-top: 1px solid #c3cfe2; font-size: 14px; color: #1b1b1b;
  background: linear-gradient(90deg, #e0ecf6 0, #e3eff8 330px, #d3e2fa 420px, #d8dcf3 550px, #d8dcf1 700px, #d3e3fb 800px, #d9dff5 960px, #d8daea 1080px, #d3dff9 1260px, #d9dbee 1400px, #d9dcec 1450px, #e2eef8 1540px, #dfebf7 1920px); }
.moon { width: 23px; height: 24px; }
.weather, .lang, .clock { display: flex; flex-direction: column; line-height: 20px; }
.weather { width: 60px; margin-left: 13px; }
.weather span:last-child { color: #5c6066; }
.apps { display: flex; gap: 7px; margin-left: 452.5px; }
.apps span { width: 48px; height: 48px; display: flex; align-items: center; justify-content: center; border-radius: 5px; position: relative; }
.apps svg { width: 30px; height: 30px; }
.apps .on { background: #eceef9; box-shadow: 0 1px 1px rgba(0,0,0,.15); }
.apps .on::after, .apps .run::after { content: ""; position: absolute; bottom: 0; left: 20px; width: 8px; height: 4px; border-radius: 2px; background: #7b7f88; }
.apps .on::after { left: 14px; width: 20px; background: #0078d4; }
.apps em { position: absolute; right: 2px; top: 2px; width: 19px; height: 19px; border-radius: 50%; background: #0078d7; color: #fff; font-style: normal; font-size: 14px; line-height: 19px; text-align: center; }
.up { width: 18px; height: 10px; margin-left: auto; }
.lang { width: 50px; align-items: center; margin-left: 9px; }
.wifi { width: 22px; height: 17px; margin-left: 12px; }
.vol { width: 21px; height: 17px; margin-left: 8px; }
.batt { width: 21px; height: 17px; margin-left: 10px; }
.clock { width: 80px; margin-left: 14px; align-items: flex-end; }
.clock span:last-child { letter-spacing: .3px; }

/* captions */
.caption { margin: 4px 0 0 301px; font-family: Lato, sans-serif; font-weight: 700; font-size: 46px; line-height: 60px; color: #000; white-space: nowrap; font-variant-ligatures: none; letter-spacing: .4px; -webkit-text-stroke: .6px #000; }
.right .caption { margin: 79px 0 0 525px; letter-spacing: .85px; }
```
